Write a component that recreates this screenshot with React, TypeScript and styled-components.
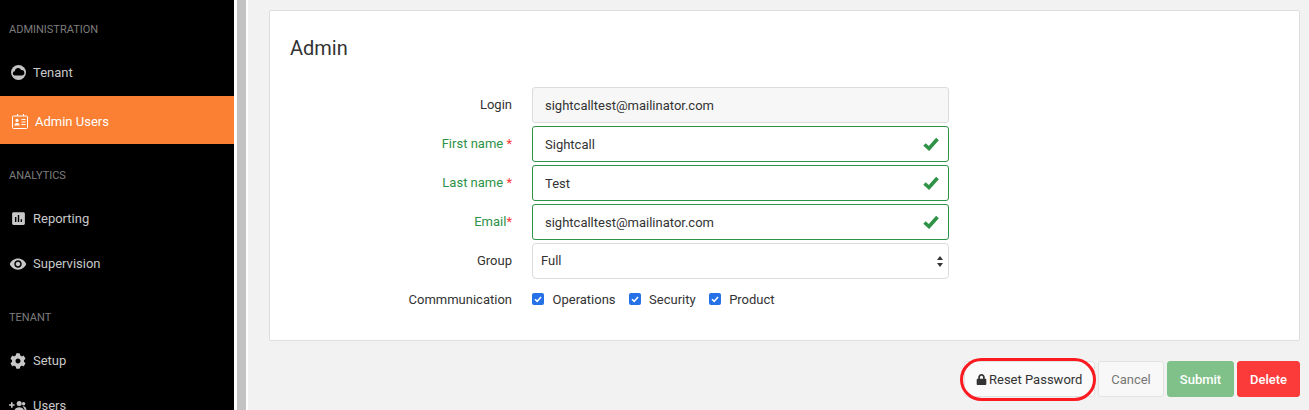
import React from "react";
import styled, { createGlobalStyle } from "styled-components";
import { FaCog, FaLock } from "react-icons/fa";
import { MdAssessment, MdVisibility } from "react-icons/md";

const GlobalStyle = createGlobalStyle`
  html, body {
    margin: 0;
    height: 100%;
    overflow: hidden;
    background: #f2f2f2;
    font-family: Roboto, "Liberation Sans", sans-serif;
  }
`;

const TenantIcon = () => (
  <svg width="15" height="15" viewBox="0 0 15 15">
    <circle cx="7.5" cy="7.5" r="7.5" fill="#c4c4c4" />
    <path
      d="M4 10.4a2.1 2.1 0 0 1-.2-4.2 3.3 3.3 0 0 1 6.3-1.2 2.7 2.7 0 0 1 1 5.4z"
      fill="#000"
    />
  </svg>
);

const BadgeIcon = () => (
  <svg width="16" height="15" viewBox="0 0 16 15" fill="none">
    <rect x="0.5" y="2" width="15" height="12.5" rx="1" stroke="#fff" />
    <path d="M5.5 0v2M11.5 0v2" stroke="#fff" />
    <circle cx="5" cy="6.4" r="1.6" fill="#fff" />
    <path d="M2.4 11.5c0-3.2 5.2-3.2 5.2 0z" fill="#fff" />
    <path d="M9.5 5.5h4M9.5 8h4M9.5 10.5h4" stroke="#fff" />
  </svg>
);

const UsersIcon = () => (
  <svg width="18" height="16" viewBox="0 0 18 16" fill="#c4c4c4">
    <path d="M2 4.2h1.6V6.2h2V7.8h-2V9.8H2V7.8H0V6.2h2z" />
    <circle cx="10.2" cy="5.4" r="2.5" />
    <circle cx="14.6" cy="5.8" r="1.7" />
    <path d="M5.5 13c0-5 9.5-5 9.5 0z" />
    <path d="M13.5 8.4c2.2-.3 4 1.2 4 3.6h-2c0-1.4-.7-2.6-2-3.6z" />
  </svg>
);

const ThickCheck = () => (
  <svg width="16" height="14" viewBox="0 0 16 14" fill="none">
    <path d="M1.5 7.5L6 11.5L14.5 2" stroke="#2e9247" strokeWidth="3.6" />
  </svg>
);

const formRows = [
  { label: "First name", star: " *", value: "Sightcall" },
  { label: "Last name", star: " *", value: "Test" },
  { label: "Email", star: "*", value: "sightcalltest@mailinator.com" },
];

const topics = ["Operations", "Security", "Product"];

export default function App() {
  return (
    <Page>
      <GlobalStyle />
      <Sidebar>
        <SectionLabel>ADMINISTRATION</SectionLabel>
        <NavItem>
          <IconSlot><TenantIcon /></IconSlot>
          Tenant
        </NavItem>
        <ActiveItem>
          <IconSlot><BadgeIcon /></IconSlot>
          Admin Users
        </ActiveItem>
        <SectionLabel>ANALYTICS</SectionLabel>
        <NavItem>
          <IconSlot><MdAssessment size={17} /></IconSlot>
          Reporting
        </NavItem>
        <NavItem>
          <IconSlot><MdVisibility size={18} /></IconSlot>
          Supervision
        </NavItem>
        <SectionLabel>TENANT</SectionLabel>
        <NavItem>
          <IconSlot><FaCog size={16} /></IconSlot>
          Setup
        </NavItem>
        <NavItem>
          <IconSlot><UsersIcon /></IconSlot>
          Users
        </NavItem>
      </Sidebar>
      <ScrollGutter>
        <ScrollThumb />
      </ScrollGutter>
      <Main>
        <Card>
          <Title>Admin</Title>
          <Form>
            <Row>
              <Label>Login</Label>
              <FieldWrap>
                <TextInput readOnly disabled value="sightcalltest@mailinator.com" />
              </FieldWrap>
            </Row>
            {formRows.map((row) => (
              <Row key={row.label}>
                <Label $valid>
                  {row.label}
                  <Star>{row.star}</Star>
                </Label>
                <FieldWrap>
                  <TextInput $valid readOnly value={row.value} />
                  <ValidMark><ThickCheck /></ValidMark>
                </FieldWrap>
              </Row>
            ))}
            <Row>
              <Label>Group</Label>
              <SelectBox>
                <SelectText>Full</SelectText>
                <svg width="6" height="11" viewBox="0 0 6 11">
                  <path d="M3 0l3 4H0zM3 11L0 7h6z" fill="#333" />
                </svg>
              </SelectBox>
            </Row>
            <Row>
              <Label>Commmunication</Label>
              <Checks>
                {topics.map((topic) => (
                  <CheckLabel key={topic}>
                    <CheckBox>
                      <svg width="10" height="10" viewBox="0 0 10 10" fill="none">
                        <path d="M2 5.2l2.2 2.2L8 3" stroke="#fff" strokeWidth="1.6" />
                      </svg>
                    </CheckBox>
                    {topic}
                  </CheckLabel>
                ))}
              </Checks>
            </Row>
          </Form>
        </Card>
        <Actions>
          <ResetButton>
            <FaLock size={11} />
            Reset Password
            <Circled />
          </ResetButton>
          <CancelButton>Cancel</CancelButton>
          <FilledButton $color="#80c189" $width={67}>Submit</FilledButton>
          <FilledButton $color="#fb3a3a" $width={63}>Delete</FilledButton>
        </Actions>
      </Main>
    </Page>
  );
}

const Page = styled.div`
  display: flex;
  height: 410px;
  overflow: hidden;
`;

const Sidebar = styled.nav`
  width: 234px;
  flex-shrink: 0;
  background: #000;
  padding-top: 23px;
  box-sizing: border-box;
  overflow: hidden;
`;

const SectionLabel = styled.div`
  height: 14px;
  line-height: 14px;
  margin: 0 0 13px 9px;
  font-size: 11px;
  color: #7d7d7d;

  & ~ & {
    margin-top: 25px;
  }
`;

const NavItem = styled.div`
  display: flex;
  align-items: center;
  height: 45px;
  padding-left: 9px;
  font-size: 13px;
  color: #c8c8c8;
`;

const ActiveItem = styled(NavItem)`
  height: 48px;
  margin-top: 1px;
  padding: 2px 0 0 11px;
  box-sizing: border-box;
  background: #fb8033;
  color: #fff;
`;

const IconSlot = styled.span`
  display: flex;
  align-items: center;
  justify-content: center;
  width: 18px;
  margin-right: 6px;
`;

const ScrollGutter = styled.div`
  width: 14px;
  flex-shrink: 0;
  padding: 0 2px 0 3px;
  box-sizing: border-box;
  background: #fff;
`;

const ScrollThumb = styled.div`
  height: 100%;
  background: #c3c3c3;
`;

const Main = styled.main`
  flex: 1;
  padding: 10px 9px 0 21px;
  background: #f2f2f2;
`;

const Card = styled.section`
  height: 331px;
  box-sizing: border-box;
  padding: 26px 20px 0;
  background: #fff;
  border: 1px solid #dedede;
  border-radius: 2px;
`;

const Title = styled.h2`
  margin: 0;
  font-size: 20px;
  line-height: 22px;
  font-weight: 400;
  color: #333;
`;

const Form = styled.div`
  display: flex;
  flex-direction: column;
  gap: 3px;
  margin-top: 28px;
`;

const Row = styled.div`
  display: flex;
  align-items: center;
  gap: 20px;
  height: 36px;
`;

const Label = styled.label<{ $valid?: boolean }>`
  width: 222px;
  padding-bottom: 2px;
  text-align: right;
  font-size: 13px;
  color: ${(p) => (p.$valid ? "#2e9247" : "#333")};
`;

const Star = styled.span`
  color: #fb3a3a;
`;

const FieldWrap = styled.div`
  position: relative;
  width: 417px;
`;

const TextInput = styled.input<{ $valid?: boolean }>`
  display: block;
  width: 100%;
  height: 36px;
  box-sizing: border-box;
  padding: 0 12px;
  font: 400 13px Roboto, sans-serif;
  color: #333;
  background: ${(p) => (p.disabled ? "#f7f7f7" : "#fff")};
  border: 1px solid ${(p) => (p.$valid ? "#2e9247" : "#dcdcdc")};
  border-radius: 3px;
  outline: none;
`;

const ValidMark = styled.span`
  position: absolute;
  right: 10px;
  top: 11px;
  display: flex;
`;

const SelectBox = styled.div`
  display: flex;
  align-items: center;
  justify-content: space-between;
  width: 417px;
  height: 36px;
  box-sizing: border-box;
  padding: 0 5px 0 8px;
  font-size: 13px;
  color: #333;
  background: #fff;
  border: 1px solid #dcdcdc;
  border-radius: 4px;
`;

const SelectText = styled.span`
  padding-bottom: 2px;
`;

const Checks = styled.div`
  display: flex;
  gap: 13px;
  padding-bottom: 2px;
`;

const CheckLabel = styled.span`
  display: flex;
  align-items: center;
  gap: 8.5px;
  font-size: 13px;
  color: #333;
`;

const CheckBox = styled.span`
  display: flex;
  align-items: center;
  justify-content: center;
  width: 12px;
  height: 12px;
  border-radius: 2px;
  background: #2671e8;
`;

const Actions = styled.div`
  display: flex;
  justify-content: flex-end;
  gap: 3px;
  margin-top: 20px;
`;

const BaseButton = styled.button`
  height: 36px;
  box-sizing: border-box;
  padding: 0 12px;
  font: 500 13px Roboto, sans-serif;
  border-radius: 3px;
  cursor: pointer;
`;

const ResetButton = styled(BaseButton)`
  position: relative;
  display: flex;
  align-items: center;
  gap: 2px;
  width: 131px;
  padding: 0 0 0 11px;
  font-weight: 400;
  color: #333;
  background: #fafafa;
  border: 1px solid #e2e2e2;
`;

const Circled = styled.span`
  position: absolute;
  left: -5px;
  right: -2px;
  top: -4px;
  bottom: -5px;
  border: 3px solid #fa1a1f;
  border-radius: 22px;
`;

const CancelButton = styled(BaseButton)`
  width: 66px;
  padding: 0;
  font-weight: 400;
  color: #777;
  background: #f8f8f8;
  border: 1px solid #e2e2e2;
`;

const FilledButton = styled(BaseButton)<{ $color: string; $width: number }>`
  padding: 0;
  width: ${(p) => p.$width}px;
  color: #fff;
  background: ${(p) => p.$color};
  border: 1px solid ${(p) => p.$color};
`;
